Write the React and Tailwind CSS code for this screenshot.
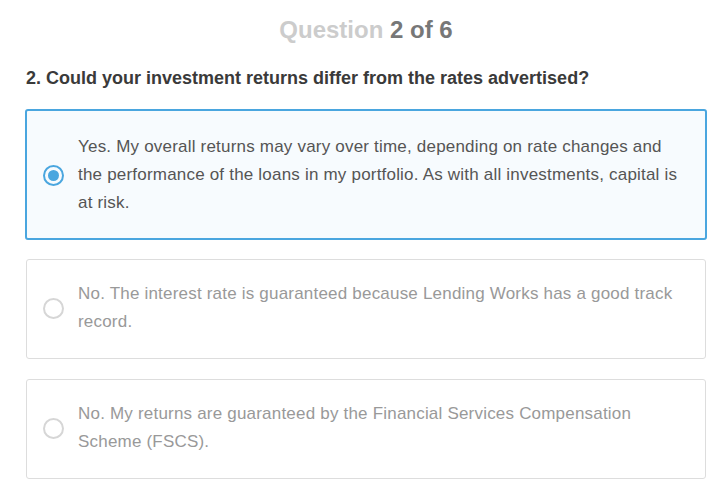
import { useState } from "react";

const options = [
  "Yes. My overall returns may vary over time, depending on rate changes and the performance of the loans in my portfolio. As with all investments, capital is at risk.",
  "No. The interest rate is guaranteed because Lending Works has a good track record.",
  "No. My returns are guaranteed by the Financial Services Compensation Scheme (FSCS).",
];

const Radio = ({ checked }) => {
  if (checked) {
    return (
      <span className="flex items-center justify-center w-[21px] h-[21px] rounded-full border-2 border-[#4aa6df] shrink-0">
        <span className="w-[11px] h-[11px] rounded-full bg-[#4aa6df]" />
      </span>
    );
  }
  return (
    <span className="w-[21px] h-[21px] rounded-full border-2 border-[#d6d6d6] shrink-0" />
  );
};

const App = () => {
  const [selected, setSelected] = useState(0);

  return (
    <div className="bg-white min-h-screen pt-[16px] pl-[25px] pr-[19px] font-['Liberation_Sans',Arial,sans-serif]">
      <h1 className="text-center text-[24px] leading-[28px] font-bold">
        <span className="text-[#cccccc]">Question</span>{" "}
        <span className="text-[#777777]">2 of 6</span>
      </h1>
      <p className="mt-[23px] pl-[1px] text-[18px] leading-[22px] font-bold text-[#3a3a3a]">
        2. Could your investment returns differ from the rates advertised?
      </p>
      <ul className="mt-[20px] flex flex-col gap-[18px]">
        {options.map((text, i) => {
          const checked = selected === i;
          return (
            <li key={i}>
              <label
                onClick={() => setSelected(i)}
                className={
                  checked
                    ? "flex items-center gap-[14px] rounded-[3px] border-2 border-[#4aa6df] bg-[#f7fbfe] pt-[22px] pb-[21px] pl-[16px] pr-[20px] cursor-pointer"
                    : "flex items-center gap-[14px] rounded-[3px] border border-[#dddddd] bg-white m-[1px] pt-[20px] pb-[22px] pl-[16px] pr-[19px] cursor-pointer"
                }
              >
                <Radio checked={checked} />
                <span
                  className={
                    checked
                      ? "text-[17px] leading-[28px] tracking-[0.2px] text-[#555555]"
                      : "text-[17px] leading-[28px] tracking-[0.2px] text-[#999999]"
                  }
                >
                  {text}
                </span>
              </label>
            </li>
          );
        })}
      </ul>
    </div>
  );
};

export default App;
